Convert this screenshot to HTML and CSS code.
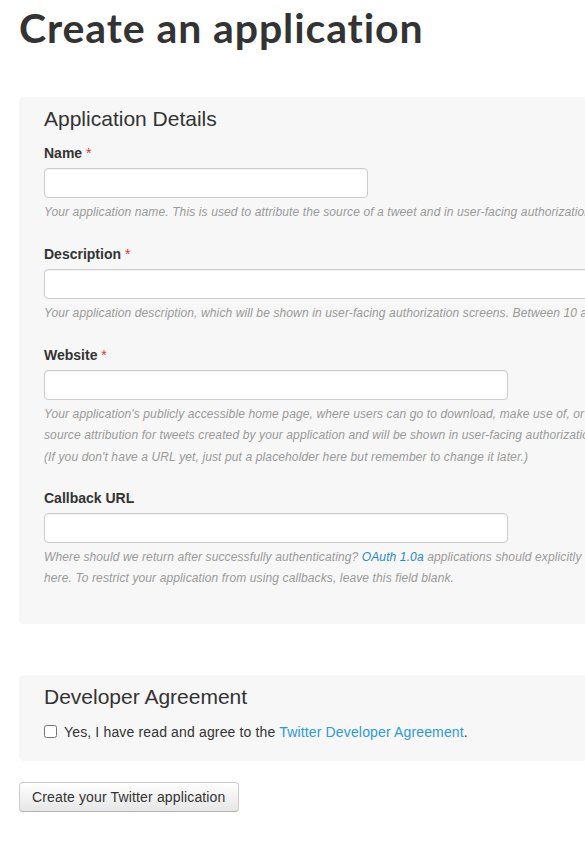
FILE: index.html
```html
<!DOCTYPE html>
<html lang="en">
<head>
<meta charset="utf-8">
<title>Create an application</title>
<link rel="stylesheet" href="styles.css">
</head>
<body>
<div class="page">
  <h1 class="title">Create an application</h1>

  <section class="panel panel-details">
    <h2 class="panel-title">Application Details</h2>

    <div class="field">
      <label class="label">Name <span class="req">*</span></label>
      <input class="input input-sm" type="text">
      <p class="help">Your application name. This is used to attribute the source of a tweet and in user-facing authorization screens. 32 characters max.</p>
    </div>

    <div class="field">
      <label class="label">Description <span class="req">*</span></label>
      <input class="input input-xl" type="text">
      <p class="help">Your application description, which will be shown in user-facing authorization screens. Between 10 and 200 characters max.</p>
    </div>

    <div class="field">
      <label class="label">Website <span class="req">*</span></label>
      <input class="input input-lg" type="text">
      <p class="help">Your application's publicly accessible home page, where users can go to download, make use of, or find out more information about your application. This fully-qualified URL is used in the<br>source attribution for tweets created by your application and will be shown in user-facing authorization screens.<br>(If you don't have a URL yet, just put a placeholder here but remember to change it later.)</p>
    </div>

    <div class="field field-last">
      <label class="label">Callback URL</label>
      <input class="input input-lg" type="text">
      <p class="help">Where should we return after successfully authenticating? <a class="help-link" href="#">OAuth 1.0a</a> applications should explicitly specify their oauth_callback URL on the request token step, regardless of the value given<br>here. To restrict your application from using callbacks, leave this field blank.</p>
    </div>
  </section>

  <section class="panel panel-agree">
    <h2 class="panel-title">Developer Agreement</h2>
    <label class="agree">
      <input class="check" type="checkbox">
      <span>Yes, I have read and agree to the <a class="link" href="#">Twitter Developer Agreement</a>.</span>
    </label>
  </section>

  <button class="btn" type="button">Create your Twitter application</button>
</div>
</body>
</html>
```

FILE: styles.css
```css
html, body {
  margin: 0;
  padding: 0;
  overflow: hidden;
  background: #fff;
}

body {
  font-family: "Liberation Sans", Arial, sans-serif;
  color: #333;
}

.page {
  width: 900px;
  padding: 0 0 0 19px;
}

.title {
  font-family: "Lato", "Liberation Sans", sans-serif;
  font-weight: 700;
  font-size: 41px;
  line-height: 56px;
  letter-spacing: 0.9px;
  color: #333;
  margin: 0 0 41px 0;
}

.panel {
  background: #f7f7f7;
  border-radius: 5px;
  padding: 10px 25px 15px 25px;
  width: 800px;
}

.panel-details {
  padding-bottom: 13px;
}

.panel-title {
  font-weight: 400;
  font-size: 21px;
  line-height: 23px;
  margin: 0 0 13px 0;
  color: #333;
}

.field {
  display: flex;
  flex-direction: column;
  align-items: flex-start;
  margin-bottom: 21px;
}

.field-last {
  margin-top: -1px;
}

.label {
  font-weight: 700;
  font-size: 14px;
  line-height: 20px;
  margin-bottom: 5px;
  color: #333;
}

.req {
  color: #e9322d;
  font-weight: 400;
}

.input {
  box-sizing: border-box;
  height: 30px;
  border: 1px solid #ccc;
  border-radius: 4px;
  background: #fff;
  box-shadow: inset 0 1px 1px rgba(0,0,0,0.05);
  margin: 0;
  padding: 4px 6px;
}

.input-sm { width: 324px; }
.input-lg { width: 464px; }
.input-xl { width: 620px; }

.help {
  font-style: italic;
  font-size: 12px;
  letter-spacing: 0.12px;
  line-height: 21.5px;
  color: #999;
  margin: 3.5px 0 0 0;
  white-space: nowrap;
}

.help-link {
  color: #2b88c4;
  text-decoration: none;
}

.panel-agree {
  margin-top: 51px;
  padding-top: 10px;
  padding-bottom: 19px;
}

.panel-agree .panel-title {
  margin-bottom: 14px;
}

.agree {
  display: flex;
  align-items: center;
  font-size: 14px;
  letter-spacing: 0.15px;
  line-height: 20px;
  color: #333;
}

.check {
  width: 13px;
  height: 13px;
  margin: 0 7px 0 0;
}

.link {
  color: #2e9ad3;
  text-decoration: none;
}

.btn {
  margin-top: 21px;
  display: block;
  height: 30px;
  padding: 0 12px;
  font-family: "Liberation Sans", Arial, sans-serif;
  font-size: 14px;
  letter-spacing: 0.15px;
  color: #333;
  background: linear-gradient(#ffffff, #e6e6e6);
  border: 1px solid #ccc;
  border-bottom-color: #b3b3b3;
  border-radius: 4px;
  box-shadow: 0 1px 2px rgba(0,0,0,0.05);
}
```
